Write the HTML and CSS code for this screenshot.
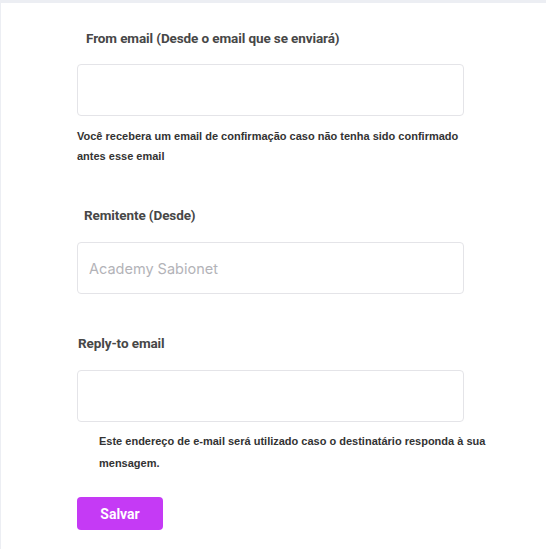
FILE: index.html
```html
<!DOCTYPE html>
<html lang="pt">
<head>
  <meta charset="UTF-8">
  <meta name="viewport" content="width=device-width, initial-scale=1.0">
  <title>Configurações de email</title>
  <link rel="stylesheet" href="styles.css">
</head>
<body>
  <div class="card">
    <form class="settings-form">
      <!-- From email -->
      <div class="field">
        <label class="field-label label-from" for="from-email">From email (Desde o email que se enviará)</label>
        <input type="email" id="from-email" class="field-input input-from">
        <p class="field-help">Você recebera um email de confirmação caso não tenha sido confirmado antes esse email</p>
      </div>

      <!-- Sender name -->
      <div class="field field-sender">
        <label class="field-label label-sender" for="sender-name">Remitente (Desde)</label>
        <input type="text" id="sender-name" class="field-input" placeholder="Academy Sabionet">
      </div>

      <!-- Reply-to -->
      <div class="field field-reply">
        <label class="field-label label-reply" for="reply-email">Reply-to email</label>
        <input type="email" id="reply-email" class="field-input">
        <p class="field-help help-reply">Este endereço de e-mail será utilizado caso o destinatário responda à sua mensagem.</p>
      </div>

      <button type="submit" class="btn-save">Salvar</button>
    </form>
  </div>
</body>
</html>
```

FILE: styles.css
```css
/* Page */
body {
  margin: 0;
  padding: 0;
  background: #eceef3;
  font-family: 'Roboto', sans-serif;
  color: #444;
}
.card {
  margin: 3px 0 0 1px;
  min-height: 546px;
  background: #fff;
}
.settings-form {
  padding: 25px 0 0 76px;
  width: 387px;
}

/* Fields */
.field-label {
  display: block;
  font-size: 13.5px;
  font-weight: 700;
  letter-spacing: -0.1px;
  color: #474747;
  line-height: 20px;
}
.label-from {
  padding-left: 9px;
}
.label-sender {
  padding-left: 7px;
}
.label-reply {
  padding-left: 1px;
}
.field-input {
  display: block;
  box-sizing: border-box;
  width: 387px;
  height: 52px;
  margin-top: 17px;
  padding: 0 11px;
  border: 1px solid #e4e4e8;
  border-radius: 4px;
  font-family: 'Inter', sans-serif;
  font-size: 14.5px;
  color: #444;
  outline: none;
}
.input-from {
  margin-top: 16px;
}
.field-input::placeholder {
  color: #b3b3b8;
}
.field-help {
  margin: 10px 0 0;
  font-family: 'Liberation Sans', Arial, sans-serif;
  font-size: 11px;
  font-weight: 700;
  line-height: 20px;
  color: #333;
}
.help-reply {
  margin-top: 8px;
  padding-left: 22px;
  width: 420px;
  line-height: 22px;
}
.field-sender {
  margin-top: 39px;
}
.field-reply {
  margin-top: 39px;
}

/* Button */
.btn-save {
  margin-top: 23px;
  width: 86px;
  height: 33px;
  background: #c53af5;
  border: none;
  border-radius: 4px;
  color: #fff;
  font-family: 'Roboto', sans-serif;
  font-size: 14px;
  font-weight: 700;
  cursor: pointer;
}
```
